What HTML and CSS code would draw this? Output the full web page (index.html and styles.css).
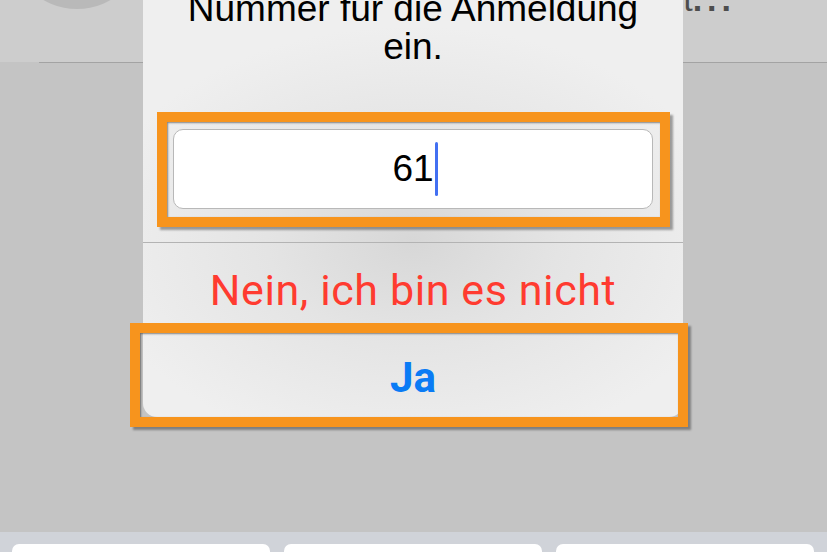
FILE: index.html
```html
<!DOCTYPE html>
<html lang="de">
<head>
    <meta charset="UTF-8">
    <meta name="viewport" content="width=device-width, initial-scale=1.0">
    <title>Anmeldung bestätigen</title>
    <link rel="stylesheet" href="styles.css">
</head>
<body>
    <div class="screen">
        <header class="topbar">
            <div class="avatar"></div>
            <div class="name">Bestätigt<span class="dots">...</span></div>
        </header>
        <div class="divider"></div>
        <main class="content"></main>

        <!-- keyboard peeking in at the bottom -->
        <div class="keyboard">
            <div class="key"></div>
            <div class="key"></div>
            <div class="key"></div>
        </div>

        <!-- confirmation alert -->
        <div class="alert">
            <p class="message">Bitte geben Sie Ihre<br>Nummer für die Anmeldung<br>ein.</p>
            <div class="field">
                <span class="value">61</span><span class="caret"></span>
            </div>
            <button class="btn btn-no">Nein, ich bin es nicht</button>
            <button class="btn btn-yes">Ja</button>

            <!-- highlight frames -->
            <div class="mark mark-field"></div>
            <div class="mark mark-yes"></div>
        </div>
    </div>
</body>
</html>
```

FILE: styles.css
```css
* {
    box-sizing: border-box;
}
body {
    margin: 0;
    background-color: #c4c4c4;
    font-family: 'Liberation Sans', Arial, sans-serif;
    overflow: hidden;
}
.screen {
    position: relative;
    width: 827px;
    height: 552px;
    display: flex;
    flex-direction: column;
    overflow: hidden;
}
.topbar {
    height: 62px;
    flex-shrink: 0;
    background-color: #cdcdcd;
    display: flex;
    align-items: flex-start;
    padding-left: 10px;
}
.avatar {
    width: 134px;
    height: 134px;
    margin-top: -125px;
    border-radius: 50%;
    background-color: #b9b9b9;
    flex-shrink: 0;
}
.name {
    flex: 1;
    margin-top: -21px;
    padding-right: 91px;
    text-align: right;
    white-space: nowrap;
    font-size: 34px;
    line-height: 40px;
    color: #4d4d4d;
}
.dots {
    font-weight: bold;
    letter-spacing: 5px;
}
.divider {
    height: 1px;
    margin-left: 39px;
    background-color: #a3a3a3;
    flex-shrink: 0;
}
.content {
    flex: 1;
}
.keyboard {
    height: 20px;
    flex-shrink: 0;
    background-color: #d0d3d9;
    display: grid;
    grid-template-columns: repeat(3, 258px);
    gap: 14px;
    padding: 12px 13px 0 12px;
}
.key {
    height: 40px;
    background-color: #fff;
    border-radius: 7px;
}

.alert {
    position: absolute;
    left: 143px;
    top: -60px;
    width: 540px;
    border-radius: 14px;
    background: radial-gradient(ellipse 60% 45% at 50% 63%, #d7d7d7 0%, #e4e4e4 45%, #efefef 100%);
    text-align: center;
}
.message {
    margin: 0;
    padding-top: 12px;
    font-size: 37px;
    line-height: 38px;
    color: #000;
}
.field {
    height: 80px;
    margin: 63px 30px 33px;
    background-color: #fff;
    border: 1px solid #b8b8b8;
    border-radius: 10px;
    display: flex;
    align-items: center;
    justify-content: center;
}
.value {
    font-size: 37px;
    color: #000;
    margin-left: 4px;
}
.caret {
    width: 3px;
    height: 54px;
    margin-left: 1px;
    border-radius: 2px;
    background-color: #4270f2;
}
.btn {
    display: block;
    width: 100%;
    height: 88px;
    border: none;
    border-top: 1px solid #b3b3b3;
    background: transparent;
    font-family: Roboto, 'Liberation Sans', sans-serif;
    font-size: 43px;
    padding: 6px 0 0;
}
.btn-no {
    color: #ff3b30;
    letter-spacing: 0.6px;
}
.btn-yes {
    color: #0a7bf5;
    font-weight: bold;
    font-size: 42px;
    height: 87px;
    border-radius: 0 0 14px 14px;
}

.mark {
    position: absolute;
    border: 10px solid #f7941d;
    box-shadow: 3px 3px 2px rgba(0, 0, 0, 0.35), inset 1px 1px 2px rgba(0, 0, 0, 0.45);
}
.mark-field {
    left: 14px;
    top: 172px;
    width: 513px;
    height: 115px;
}
.mark-yes {
    left: -13px;
    top: 383px;
    width: 558px;
    height: 104px;
}
```
